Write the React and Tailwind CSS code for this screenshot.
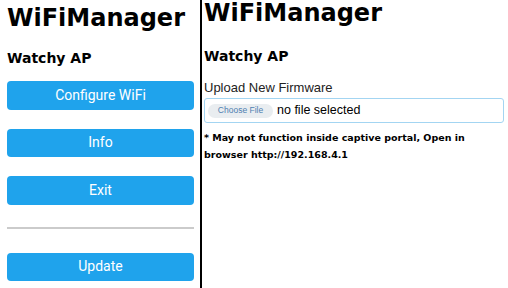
const heading = { fontFamily: '"DejaVu Sans", Verdana, sans-serif' };
const plain = { fontFamily: '"Liberation Sans", Arial, sans-serif' };

function MenuButton({ label }) {
  return (
    <button
      className="flex h-[28.5px] w-full items-center justify-center rounded-[4px] bg-[#1fa3ec] text-[14px] text-white font-[Roboto,sans-serif]"
    >
      {label}
    </button>
  );
}

export default function App() {
  return (
    <div className="flex h-[288px] w-[508px] overflow-hidden bg-white text-black">
      {/* Left: main menu */}
      <div className="flex w-[200px] shrink-0 flex-col pl-[7px] pr-[6px]" style={heading}>
        <h1 className="pt-[6px] text-[24px] font-bold leading-[24px]">WiFiManager</h1>
        <h3 className="mt-[21px] text-[14px] font-bold leading-[14px]">Watchy AP</h3>
        <div className="mt-[16px] flex flex-col gap-[19px]">
          <MenuButton label="Configure WiFi" />
          <MenuButton label="Info" />
          <MenuButton label="Exit" />
        </div>
        <div className="mt-[22px] h-[2px] bg-[#cbcbcb]" />
        <div className="mt-[24px]">
          <MenuButton label="Update" />
        </div>
      </div>

      {/* Divider */}
      <div className="w-[2px] shrink-0 bg-black" />

      {/* Right: update page */}
      <div className="flex flex-1 flex-col pl-[2px] pr-[4px]" style={heading}>
        <h1 className="pt-[1px] text-[24px] font-bold leading-[24px]">WiFiManager</h1>
        <h3 className="mt-[24px] text-[14px] font-bold leading-[14px]">Watchy AP</h3>
        <p className="mt-[18px] text-[13px] leading-[13px] text-[#222]" style={plain}>
          Upload New Firmware
        </p>
        <div className="mt-[4px] flex h-[25px] items-center rounded-[3px] border border-[#a3d5f2] pl-[3px]">
          <span
            className="flex h-[14px] w-[65px] items-center justify-center rounded-full bg-[#e9edf0] text-[8.5px] text-[#4f7fb0]"
            style={plain}
          >
            Choose File
          </span>
          <span className="ml-[4px] text-[12.5px] leading-none" style={plain}>
            no file selected
          </span>
        </div>
        <p className="mt-[6px] text-[9.5px] font-bold leading-[17px]">
          * May not function inside captive portal, Open in browser http://192.168.4.1
        </p>
      </div>
    </div>
  );
}
